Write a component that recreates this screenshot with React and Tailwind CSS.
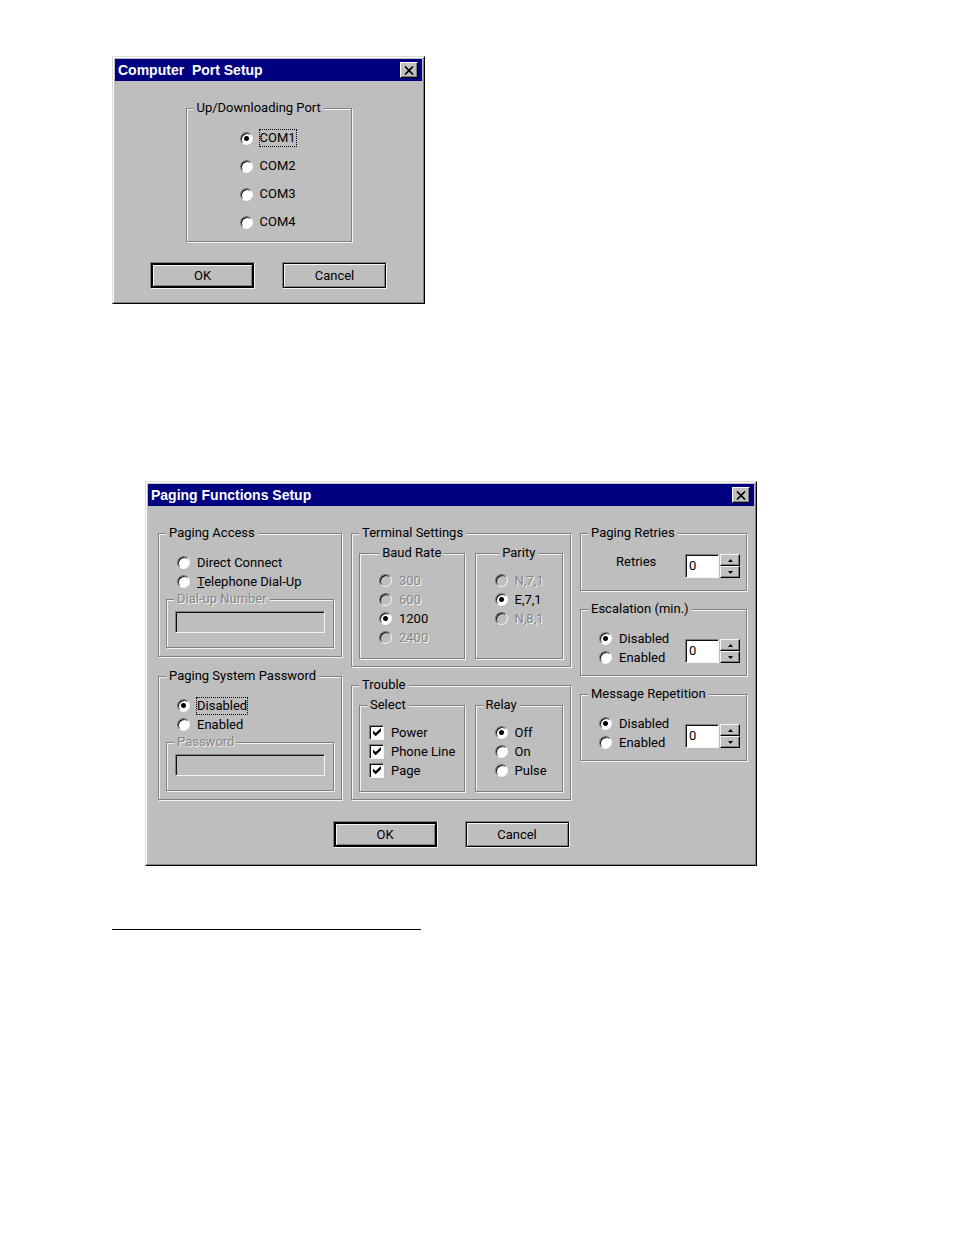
import { useId } from "react";

function Dialog({ title, className, children }) {
  return (
    <section
      aria-label={title}
      className={`bg-[#bebebe] border border-t-[#dcdcdc] border-l-[#dcdcdc] border-r-black border-b-black ${className}`}
    >
      <div className="border border-t-white border-l-white border-r-[#808080] border-b-[#808080] p-px">
        <header className="flex h-[22px] items-center justify-between bg-[#000080] pl-[3px] pr-1">
          <h2 className="whitespace-pre font-['Liberation_Sans',Arial,sans-serif] text-[14px] font-bold leading-4 text-white">{title}</h2>
          <button
            type="button"
            aria-label="Close"
            className="flex h-4 w-[18px] items-center justify-center border border-t-white border-l-white border-r-black border-b-black bg-[#c0c0c0] shadow-[inset_-1px_-1px_0_#808080]"
          >
            <svg viewBox="0 0 10 9" className="h-[9px] w-[10px]" aria-hidden="true">
              <path d="M1 .5 9 8.5M9 .5 1 8.5" stroke="#000" strokeWidth="1.7" fill="none" />
            </svg>
          </button>
        </header>
        {children}
      </div>
    </section>
  );
}

function Group({ title, id, htmlFor, centered, disabled, className = "", children }) {
  return (
    <fieldset className="min-w-0 border border-[#808080] shadow-[1px_1px_0_#f4f4f4,inset_1px_1px_0_#f4f4f4]">
      <legend
        id={id}
        className={`h-4 whitespace-nowrap bg-[#bebebe] px-[3px] leading-4 ${centered ? "mx-auto" : "ml-[7px]"} ${
          disabled ? "text-[#858585] [text-shadow:1px_1px_0_#f4f4f4]" : ""
        }`}
      >
        {htmlFor ? <label htmlFor={htmlFor}>{title}</label> : title}
      </legend>
      <div className={className}>{children}</div>
    </fieldset>
  );
}

function Radio({ name, children, checked, disabled, focused, tall }) {
  return (
    <label className={`flex items-center gap-[7px] ${tall ? "h-7" : "h-[19px]"}`}>
      <input
        type="radio"
        name={name}
        defaultChecked={checked}
        disabled={disabled}
        className="size-[13px] shrink-0 appearance-none rounded-full border border-t-[#707070] border-l-[#707070] border-r-[#f4f4f4] border-b-[#f4f4f4] bg-white shadow-[inset_1px_1px_0_#101010] outline-none checked:bg-[radial-gradient(circle,#000_2px,#fff_3px)] disabled:bg-[#bebebe]"
      />
      <span
        className={`whitespace-nowrap leading-4 ${disabled ? "text-[#858585] [text-shadow:1px_1px_0_#f4f4f4]" : ""} ${
          focused ? "outline-1 outline-dotted outline-black" : ""
        }`}
      >
        {children}
      </span>
    </label>
  );
}

function Check({ children }) {
  return (
    <label className="flex h-[19px] items-center gap-[7px]">
      <span className="grid shrink-0 place-items-center">
        <input
          type="checkbox"
          defaultChecked
          className="peer size-[15px] appearance-none border border-t-[#808080] border-l-[#808080] border-r-[#f4f4f4] border-b-[#f4f4f4] bg-white shadow-[inset_1px_1px_0_#101010] outline-none [grid-area:1/1]"
        />
        <svg
          viewBox="0 0 7 8"
          className="pointer-events-none h-[9px] w-2 opacity-0 [grid-area:1/1] peer-checked:opacity-100"
          aria-hidden="true"
        >
          <path d="M0 2.2 2.3 4.5 7 0V2.8L2.3 7.4 0 5Z" fill="#000" />
        </svg>
      </span>
      <span className="whitespace-nowrap leading-4">{children}</span>
    </label>
  );
}

function StepButton({ label, path }) {
  return (
    <button
      type="button"
      aria-label={label}
      className="flex flex-1 items-center justify-center border border-t-[#f4f4f4] border-l-[#f4f4f4] border-r-black border-b-black bg-[#c0c0c0] shadow-[inset_-1px_-1px_0_#808080]"
    >
      <svg viewBox="0 0 5 3" className="h-[3px] w-[5px]" aria-hidden="true">
        <path d={path} fill="#000" />
      </svg>
    </button>
  );
}

function Spinner({ id, labelledBy }) {
  return (
    <div className="flex h-6 shrink-0 gap-px">
      <input
        id={id}
        type="text"
        defaultValue="0"
        aria-labelledby={labelledBy}
        className="w-[34px] border border-t-[#808080] border-l-[#808080] border-r-[#f4f4f4] border-b-[#f4f4f4] bg-white px-[3px] shadow-[inset_1px_1px_0_#101010] outline-none"
      />
      <div className="flex w-5 flex-col">
        <StepButton label="Increase" path="M0 3 2.5 0 5 3Z" />
        <StepButton label="Decrease" path="M0 0 2.5 3 5 0Z" />
      </div>
    </div>
  );
}

function DisabledField({ title }) {
  const id = useId();
  return (
    <Group title={title} htmlFor={id} disabled className="px-2 pb-[14px] pt-1">
      <input
        id={id}
        type="text"
        disabled
        className="block h-[22px] w-full border border-t-[#808080] border-l-[#808080] border-r-[#f4f4f4] border-b-[#f4f4f4] bg-[#bebebe] shadow-[inset_1px_1px_0_#101010]"
      />
    </Group>
  );
}

function TimedOption({ title, name }) {
  const id = useId();
  return (
    <Group title={title} id={id} className="flex items-end justify-between pb-2 pl-[18px] pr-[6px] pt-3">
      <div>
        <Radio name={name} checked>Disabled</Radio>
        <Radio name={name}>Enabled</Radio>
      </div>
      <div className="pb-1">
        <Spinner labelledBy={id} />
      </div>
    </Group>
  );
}

function PushButton({ children, primary }) {
  return (
    <button
      type="button"
      className="h-[27px] w-[105px] border border-t-[#808080] border-l-[#808080] border-r-[#f4f4f4] border-b-[#f4f4f4]"
    >
      <span
        className={`flex h-full items-center justify-center border-black shadow-[inset_1px_1px_0_#f4f4f4,inset_-1px_-1px_0_#808080] ${
          primary ? "border-2" : "border"
        }`}
      >
        {children}
      </span>
    </button>
  );
}

function Actions() {
  return (
    <div className="flex justify-center gap-[27px]">
      <PushButton primary>OK</PushButton>
      <PushButton>Cancel</PushButton>
    </div>
  );
}

export default function App() {
  return (
    <main className="min-h-screen bg-white px-28 pt-14 font-[Roboto,'Liberation_Sans',sans-serif] text-[13px] leading-4 text-black">
      <Dialog title="Computer  Port Setup" className="w-full max-w-[313px]">
        <form className="flex flex-col gap-5 pb-3 pt-[19px]">
          <div className="mx-auto w-[166px]">
            <Group title="Up/Downloading Port" className="pb-[5px] pl-[53px] pt-2">
              <Radio name="port" tall checked focused>COM1</Radio>
              <Radio name="port" tall>COM2</Radio>
              <Radio name="port" tall>COM3</Radio>
              <Radio name="port" tall>COM4</Radio>
            </Group>
          </div>
          <Actions />
        </form>
      </Dialog>

      <Dialog title="Paging Functions Setup" className="ml-[33px] mt-[177px] w-full max-w-[612px]">
        <form className="flex flex-col gap-[21px] pb-[15px] pt-[19px]">
          <div className="grid grid-cols-[184fr_220fr_167fr] items-start gap-[9px] pl-[10px] pr-[7px]">
            <div className="flex flex-col gap-[11px]">
              <Group title="Paging Access" className="px-[7px] pb-2 pt-3">
                <div className="pl-[11px]">
                  <Radio name="access">Direct Connect</Radio>
                  <Radio name="access">
                    <span className="underline">T</span>elephone Dial-Up
                  </Radio>
                </div>
                <DisabledField title="Dial-up Number" />
              </Group>
              <Group title="Paging System Password" className="px-[7px] pb-2 pt-3">
                <div className="pl-[11px]">
                  <Radio name="password" checked focused>Disabled</Radio>
                  <Radio name="password">Enabled</Radio>
                </div>
                <DisabledField title="Password" />
              </Group>
            </div>

            <div className="flex flex-col gap-[10px]">
              <Group
                title="Terminal Settings"
                className="grid grid-cols-[105fr_88fr] gap-[10px] px-[7px] pb-[7px] pt-1"
              >
                <Group title="Baud Rate" centered className="pb-[11px] pl-[19px] pt-[10px]">
                  <Radio name="baud" disabled>300</Radio>
                  <Radio name="baud" disabled>600</Radio>
                  <Radio name="baud" checked>1200</Radio>
                  <Radio name="baud" disabled>2400</Radio>
                </Group>
                <Group title="Parity" centered className="pb-[11px] pl-[19px] pt-[10px]">
                  <Radio name="parity" disabled>N,7,1</Radio>
                  <Radio name="parity" checked>E,7,1</Radio>
                  <Radio name="parity" disabled>N,8,1</Radio>
                </Group>
              </Group>
              <Group title="Trouble" className="grid grid-cols-[105fr_88fr] gap-[10px] px-[7px] pb-[7px] pt-1">
                <Group title="Select" className="pb-[11px] pl-[9px] pt-[10px]">
                  <Check>Power</Check>
                  <Check>Phone Line</Check>
                  <Check>Page</Check>
                </Group>
                <Group title="Relay" className="pb-[11px] pl-[19px] pt-[10px]">
                  <Radio name="relay" checked>Off</Radio>
                  <Radio name="relay">On</Radio>
                  <Radio name="relay">Pulse</Radio>
                </Group>
              </Group>
            </div>

            <div className="flex flex-col gap-[10px]">
              <Group
                title="Paging Retries"
                className="flex items-start justify-between pb-3 pl-[35px] pr-[6px] pt-[13px]"
              >
                <label htmlFor="retries">Retries</label>
                <Spinner id="retries" />
              </Group>
              <TimedOption title="Escalation (min.)" name="escalation" />
              <TimedOption title="Message Repetition" name="repetition" />
            </div>
          </div>
          <Actions />
        </form>
      </Dialog>

      <hr className="mt-[63px] w-full max-w-[309px] border-t border-black" />
    </main>
  );
}
